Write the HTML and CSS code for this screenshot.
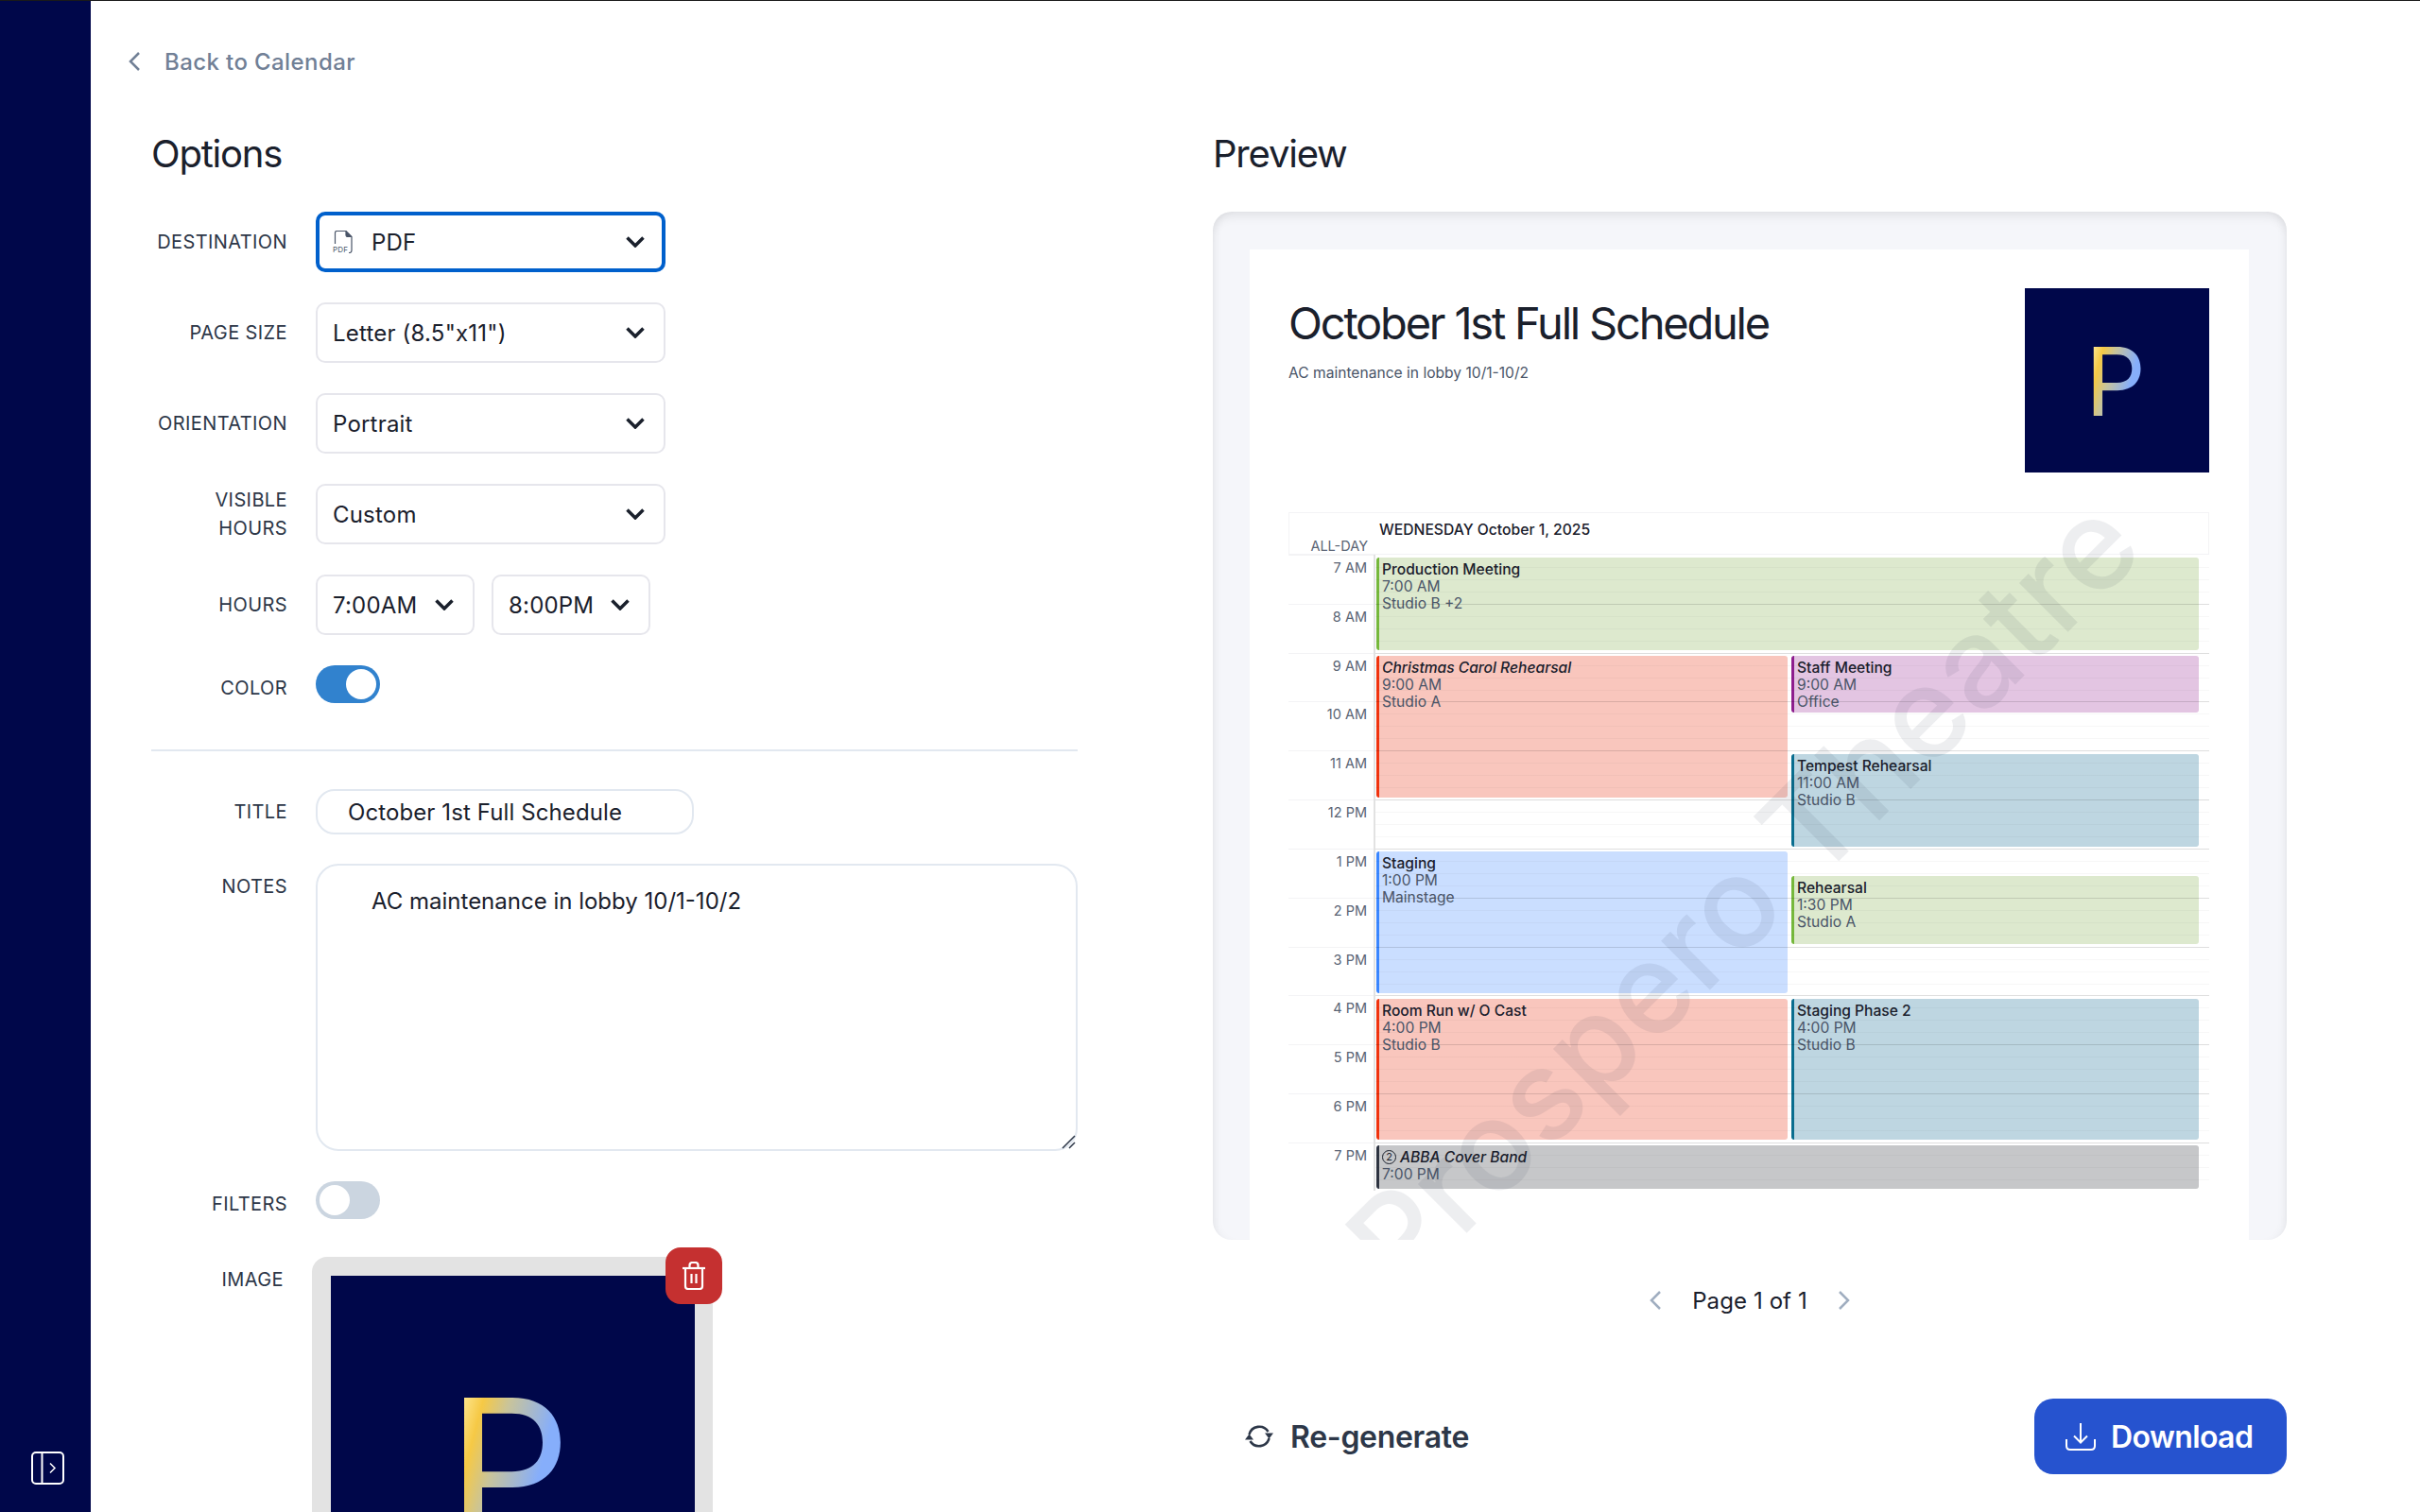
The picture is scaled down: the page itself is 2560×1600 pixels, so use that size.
FILE: index.html
```html
<!DOCTYPE html>
<html lang="en">
<head>
  <meta charset="UTF-8">
  <title>Print Schedule</title>
  <link rel="stylesheet" href="styles.css">
</head>
<body>
  <div class="app">
    <aside class="sidebar">
      <svg class="sidebar-toggle" width="35" height="35" viewBox="0 0 35 35" fill="none" stroke="#fff" stroke-width="2">
        <rect x="1" y="1" width="33" height="33" rx="4"/>
        <path d="M11.5 1v33"/>
        <path d="M20 12.500l5 5-5 5" stroke-width="1.500"/>
      </svg>
    </aside>

    <main class="main">
      <a class="back-link">
        <svg width="12" height="20" viewBox="0 0 12 20" fill="none" stroke="#718096" stroke-width="2.500"><path d="M11 1L2 10l9 9"/></svg>
        <span>Back to Calendar</span>
      </a>

      <div class="columns">
        <section class="options">
          <h2 class="section-title">Options</h2>

          <div class="form-row">
            <label class="form-label">Destination</label>
            <div class="select select-focus">
              <svg class="pdf-icon" width="22" height="24" viewBox="0 0 22 24" fill="none" stroke="#4a5568" stroke-width="1.200">
                <path d="M2.500 14V2.500q0-2 2-2H14l6 6V21q0 2.500-2.500 2.500H17"/>
                <path d="M14 .5v4q0 2 2 2h4" fill="#4a5568"/>
                <text x="0" y="23" class="pdf-icon-text">PDF</text>
              </svg>
              <span class="select-value">PDF</span>
              <svg class="chevron" width="20" height="12" viewBox="0 0 20 12" fill="none" stroke="#1a202c" stroke-width="3.500"><path d="M1.500 1.500L10 10l8.500-8.500"/></svg>
            </div>
          </div>

          <div class="form-row">
            <label class="form-label">Page size</label>
            <div class="select">
              <span class="select-value">Letter (8.5"x11")</span>
              <svg class="chevron" width="20" height="12" viewBox="0 0 20 12" fill="none" stroke="#1a202c" stroke-width="3.500"><path d="M1.500 1.500L10 10l8.500-8.500"/></svg>
            </div>
          </div>

          <div class="form-row">
            <label class="form-label">Orientation</label>
            <div class="select">
              <span class="select-value">Portrait</span>
              <svg class="chevron" width="20" height="12" viewBox="0 0 20 12" fill="none" stroke="#1a202c" stroke-width="3.500"><path d="M1.500 1.500L10 10l8.500-8.500"/></svg>
            </div>
          </div>

          <div class="form-row">
            <label class="form-label">Visible<br>hours</label>
            <div class="select">
              <span class="select-value">Custom</span>
              <svg class="chevron" width="20" height="12" viewBox="0 0 20 12" fill="none" stroke="#1a202c" stroke-width="3.500"><path d="M1.500 1.500L10 10l8.500-8.500"/></svg>
            </div>
          </div>

          <div class="form-row">
            <label class="form-label">Hours</label>
            <div class="hour-selects">
              <div class="select select-small">
                <span class="select-value">7:00AM</span>
                <svg class="chevron" width="20" height="12" viewBox="0 0 20 12" fill="none" stroke="#1a202c" stroke-width="3.500"><path d="M1.500 1.500L10 10l8.500-8.500"/></svg>
              </div>
              <div class="select select-small">
                <span class="select-value">8:00PM</span>
                <svg class="chevron" width="20" height="12" viewBox="0 0 20 12" fill="none" stroke="#1a202c" stroke-width="3.500"><path d="M1.500 1.500L10 10l8.500-8.500"/></svg>
              </div>
            </div>
          </div>

          <div class="form-row toggle-row">
            <label class="form-label">Color</label>
            <span class="toggle toggle-on"><span class="toggle-knob"></span></span>
          </div>

          <hr class="divider">

          <div class="form-row title-row">
            <label class="form-label">Title</label>
            <input class="title-input" type="text" value="October 1st Full Schedule">
          </div>

          <div class="form-row notes-row">
            <label class="form-label">Notes</label>
            <div class="notes-wrap">
              <textarea class="notes-input">AC maintenance in lobby 10/1-10/2</textarea>
              <svg class="notes-grip" width="15" height="15" viewBox="0 0 15 15" fill="none" stroke="#2d3748" stroke-width="1.500">
                <path d="M1 14L14 1M8 14l6-6"/>
              </svg>
            </div>
          </div>

          <div class="form-row toggle-row">
            <label class="form-label">Filters</label>
            <span class="toggle"><span class="toggle-knob"></span></span>
          </div>

          <div class="form-row image-row">
            <label class="form-label">Image</label>
            <div class="image-frame">
              <div class="logo logo-large"><span class="logo-letter">P</span></div>
              <button class="delete-btn">
                <svg width="26" height="30" viewBox="0 0 26 30" fill="none" stroke="#fff" stroke-width="2.200" stroke-linejoin="round">
                  <path d="M1 7h24"/>
                  <path d="M8.500 7V4q0-3 3-3h3q3 0 3 3v3"/>
                  <path d="M4 7v19q0 3 3 3h12q3 0 3-3V7"/>
                  <path d="M10.500 13v10M15.500 13v10"/>
                </svg>
              </button>
            </div>
          </div>
        </section>

        <section class="preview">
          <h2 class="section-title">Preview</h2>

          <div class="preview-sheet">
            <div class="doc-page">
              <div class="doc-header">
                <div class="doc-heading">
                  <h1 class="doc-title">October 1st Full Schedule</h1>
                  <p class="doc-notes">AC maintenance in lobby 10/1-10/2</p>
                </div>
                <div class="logo logo-small"><span class="logo-letter">P</span></div>
              </div>

              <div class="cal-head">
                <div class="cal-allday">ALL-DAY</div>
                <div class="cal-date">WEDNESDAY October 1, 2025</div>
              </div>

              <div class="cal-body">
                <div class="cal-gutter">
                  <div class="cal-hour">7 AM</div>
                  <div class="cal-hour">8 AM</div>
                  <div class="cal-hour">9 AM</div>
                  <div class="cal-hour">10 AM</div>
                  <div class="cal-hour">11 AM</div>
                  <div class="cal-hour">12 PM</div>
                  <div class="cal-hour">1 PM</div>
                  <div class="cal-hour">2 PM</div>
                  <div class="cal-hour">3 PM</div>
                  <div class="cal-hour">4 PM</div>
                  <div class="cal-hour">5 PM</div>
                  <div class="cal-hour">6 PM</div>
                  <div class="cal-hour">7 PM</div>
                </div>

                <div class="cal-grid">
                  <div class="ev ev-full ev-green" style="top:3px;height:98px">
                    <div class="ev-title">Production Meeting</div><div>7:00 AM</div><div>Studio B +2</div>
                  </div>
                  <div class="ev ev-a ev-red" style="top:107px;height:150px">
                    <div class="ev-title ev-italic">Christmas Carol Rehearsal</div><div>9:00 AM</div><div>Studio A</div>
                  </div>
                  <div class="ev ev-b ev-purple" style="top:107px;height:60px">
                    <div class="ev-title">Staff Meeting</div><div>9:00 AM</div><div>Office</div>
                  </div>
                  <div class="ev ev-b ev-teal" style="top:211px;height:98px">
                    <div class="ev-title">Tempest Rehearsal</div><div>11:00 AM</div><div>Studio B</div>
                  </div>
                  <div class="ev ev-a ev-blue" style="top:314px;height:150px">
                    <div class="ev-title">Staging</div><div>1:00 PM</div><div>Mainstage</div>
                  </div>
                  <div class="ev ev-b ev-green" style="top:340px;height:72px">
                    <div class="ev-title">Rehearsal</div><div>1:30 PM</div><div>Studio A</div>
                  </div>
                  <div class="ev ev-a ev-red" style="top:470px;height:149px">
                    <div class="ev-title">Room Run w/ O Cast</div><div>4:00 PM</div><div>Studio B</div>
                  </div>
                  <div class="ev ev-b ev-teal" style="top:470px;height:149px">
                    <div class="ev-title">Staging Phase 2</div><div>4:00 PM</div><div>Studio B</div>
                  </div>
                  <div class="ev ev-full ev-grey" style="top:625px;height:46px">
                    <div class="ev-title ev-italic"><span class="ev-count">2</span>ABBA Cover Band</div><div>7:00 PM</div>
                  </div>

                  <div class="cal-lines">
                    <div class="cal-line"></div><div class="cal-line"></div><div class="cal-line"></div><div class="cal-line"></div>
                    <div class="cal-line"></div><div class="cal-line"></div><div class="cal-line"></div><div class="cal-line"></div>
                    <div class="cal-line"></div><div class="cal-line"></div><div class="cal-line"></div><div class="cal-line"></div>
                    <div class="cal-line"></div>
                  </div>
                </div>
              </div>

              <div class="watermark">Prospero Theatre</div>
            </div>
          </div>

          <div class="pager">
            <svg width="12" height="20" viewBox="0 0 12 20" fill="none" stroke="#a0aec0" stroke-width="2.500"><path d="M11 1L2 10l9 9"/></svg>
            <span>Page 1 of 1</span>
            <svg width="12" height="20" viewBox="0 0 12 20" fill="none" stroke="#a0aec0" stroke-width="2.500"><path d="M1 1l9 9-9 9"/></svg>
          </div>

          <div class="actions">
            <button class="regen-btn">
              <svg width="32" height="32" viewBox="0 0 32 32" fill="none" stroke="#2d3748" stroke-width="2.600">
                <path d="M5.500 14A11 11 0 0 1 25.500 11"/>
                <path d="M26.500 18A11 11 0 0 1 6.500 21"/>
                <path d="M22 12.500h9l-4.500 6z" fill="#2d3748" stroke="none"/>
                <path d="M1 19.500h9l-4.500-6z" fill="#2d3748" stroke="none"/>
              </svg>
              Re-generate
            </button>
            <button class="download-btn">
              <svg width="32" height="30" viewBox="0 0 32 30" fill="none" stroke="#fff" stroke-width="2">
                <path d="M16 1v20M9 14.500l7 7 7-7"/>
                <path d="M1 18v7q0 4 4 4h22q4 0 4-4v-7"/>
              </svg>
              Download
            </button>
          </div>
        </section>
      </div>
    </main>
  </div>
</body>
</html>
```
FILE: styles.css
```css
* {
  box-sizing: border-box;
}

html, body {
  margin: 0;
  height: 1600px;
  overflow: hidden;
}

body {
  background: #fff;
  color: #1a202c;
  font-family: Inter, "Liberation Sans", sans-serif;
  border-top: 1px solid #1a1a1a;
}

.app {
  display: flex;
  height: 1599px;
}

.sidebar {
  width: 96px;
  flex-shrink: 0;
  background: #00074a;
  display: flex;
  align-items: flex-end;
  justify-content: center;
  padding: 0 0 29px 5px;
}

.main {
  flex: 1;
  padding: 51px 141px 0 40px;
  overflow: hidden;
}

.back-link {
  display: flex;
  align-items: center;
  gap: 26px;
  height: 26px;
  color: #718096;
  font-size: 24px;
  font-weight: 500;
  letter-spacing: 0.4px;
}

.columns {
  display: grid;
  grid-template-columns: 980px 1136px;
  column-gap: 143px;
  margin-top: 60px;
  margin-left: 24px;
}

.section-title {
  margin: 0;
  height: 50px;
  font-size: 40px;
  line-height: 50px;
  font-weight: 400;
  letter-spacing: -1.2px;
  color: #1a202c;
}

/* options form */
.options .section-title {
  margin-bottom: 36px;
}

.form-row {
  display: flex;
  align-items: center;
  gap: 30px;
  margin-bottom: 32px;
}

.form-label {
  width: 144px;
  flex-shrink: 0;
  text-align: right;
  text-transform: uppercase;
  font-size: 20px;
  line-height: 30px;
  letter-spacing: 0.4px;
  color: #2d3748;
}

.select {
  width: 370px;
  height: 64px;
  display: flex;
  align-items: center;
  padding: 0 20px 0 16px;
  background: #fff;
  border: 2px solid #e6e6ec;
  border-radius: 10px;
  font-size: 24px;
  letter-spacing: 0.2px;
}

.select-focus {
  border: 4px solid #0060cc;
  padding: 0 18px 0 14px;
}

.pdf-icon {
  margin-right: 19px;
}

.pdf-icon-text {
  font-size: 8px;
  fill: #4a5568;
  stroke: none;
}

.select-value {
  flex: 1;
}

.hour-selects {
  display: flex;
  gap: 18px;
}

.select-small {
  width: 168px;
}

.toggle-row .form-label {
  padding-top: 8px;
}

.toggle {
  width: 68px;
  height: 40px;
  padding: 4px;
  display: flex;
  background: #cbd5e0;
  border-radius: 20px;
}

.toggle-on {
  justify-content: flex-end;
  background: #3182ce;
}

.toggle-knob {
  width: 32px;
  height: 32px;
  background: #fff;
  border-radius: 50%;
}

.divider {
  margin: 49px 0 40px;
  border: 0;
  border-top: 2px solid #e2e8f0;
}

.title-input {
  width: 400px;
  height: 48px;
  padding: 0 32px;
  border: 2px solid #e2e8f0;
  border-radius: 20px;
  font: inherit;
  font-size: 24px;
  letter-spacing: 0.1px;
  color: #1a202c;
}

.title-row {
  margin-bottom: 31px;
}

.notes-row {
  align-items: flex-start;
}

.notes-row .form-label {
  padding-top: 9px;
}

.notes-wrap {
  position: relative;
  width: 806px;
  height: 304px;
}

.notes-input {
  display: block;
  width: 100%;
  height: 100%;
  padding: 22px 57px;
  border: 2px solid #e2e8f0;
  border-radius: 24px;
  font: inherit;
  font-size: 24px;
  line-height: 32px;
  color: #1a202c;
  resize: none;
}

.notes-grip {
  position: absolute;
  right: 2px;
  bottom: 2px;
}

.image-row {
  align-items: flex-start;
  margin-top: 40px;
}

.image-row .form-label {
  width: 140px;
  padding-top: 9px;
}

.image-frame {
  position: relative;
  width: 424px;
  height: 425px;
  padding: 20px;
  background: #e3e3e3;
  border-radius: 16px 16px 0 0;
}

.delete-btn {
  position: absolute;
  top: -10px;
  right: -10px;
  width: 60px;
  height: 60px;
  display: flex;
  align-items: center;
  justify-content: center;
  padding: 0;
  border: 0;
  border-radius: 16px;
  background: #c53030;
}

/* logo block is shared by the form thumb and the doc header */
.logo {
  display: flex;
  align-items: center;
  justify-content: center;
  background: #00074a;
}

.logo-letter {
  font-weight: 400;
  background: linear-gradient(105deg, #fde58f 13%, #f6c945 25%, #c9c49a 40%, #86aefb 68%);
  -webkit-background-clip: text;
  background-clip: text;
  color: transparent;
}

.logo-small {
  width: 195px;
  height: 195px;
  flex-shrink: 0;
  font-size: 100px;
}

.logo-small .logo-letter {
  line-height: 100px;
  margin: 3px 3px 0 0;
}

.logo-large {
  width: 385px;
  height: 385px;
  font-size: 205px;
}

.logo-large .logo-letter {
  line-height: 205px;
  margin: 22px 8px 0 0;
}

/* preview */
.preview .section-title {
  margin-bottom: 36px;
}

.preview-sheet {
  height: 1088px;
  padding: 40px 40px 0 39px;
  background: #f5f6fa;
  border-radius: 20px;
  box-shadow: inset 0 8px 12px -4px rgba(0, 0, 0, 0.09), inset 8px 0 10px -6px rgba(0, 0, 0, 0.05), inset -8px 0 10px -6px rgba(0, 0, 0, 0.05);
  overflow: hidden;
}

.doc-page {
  position: relative;
  height: 1048px;
  padding: 41px 42px 0 41px;
  background: #fff;
  overflow: hidden;
}

.doc-header {
  display: flex;
  justify-content: space-between;
  height: 195px;
}

.doc-title {
  margin: 8px 0 0;
  font-size: 47px;
  line-height: 58px;
  font-weight: 400;
  letter-spacing: -2.2px;
  color: #1a202c;
}

.doc-notes {
  margin: 14px 0 0;
  font-size: 15.6px;
  line-height: 20px;
  color: #4a5568;
}

.cal-head {
  display: flex;
  height: 45px;
  margin-top: 42px;
  border: 1px solid #f3f3f5;
}

.cal-allday {
  width: 83px;
  padding-top: 26px;
  text-align: right;
  font-size: 14.5px;
  line-height: 18px;
  color: #5a6474;
}

.cal-date {
  margin-left: 12px;
  padding-top: 8px;
  font-size: 15.7px;
  line-height: 20px;
  font-weight: 500;
  color: #1a202c;
}

.cal-body {
  display: flex;
  height: 673px;
}

.cal-gutter {
  width: 92px;
  flex-shrink: 0;
  border-right: 2px solid #e2e2e2;
}

.cal-hour {
  height: 51.83px;
  padding: 4px 7px 0 0;
  border-top: 1px solid #f3f3f5;
  text-align: right;
  font-size: 14.5px;
  line-height: 18px;
  color: #5a6474;
}

.cal-grid {
  position: relative;
  flex: 1;
}

.ev {
  position: absolute;
  padding: 4px 0 0 3px;
  border-left: 3px solid;
  border-radius: 3px;
  overflow: hidden;
  font-size: 15.6px;
  line-height: 18px;
  color: #4a5568;
}

.ev-title {
  font-weight: 500;
  color: #1a202c;
}

.ev-italic {
  font-style: italic;
}

.ev-count {
  display: inline-flex;
  align-items: center;
  justify-content: center;
  width: 15px;
  height: 15px;
  margin-right: 4px;
  border: 1px solid #1a202c;
  border-radius: 50%;
  font-size: 11px;
  font-style: normal;
  font-weight: 400;
  vertical-align: 2px;
}

.ev-full {
  left: 1px;
  right: 11px;
}

.ev-a {
  left: 1px;
  width: 435px;
}

.ev-b {
  left: 440px;
  right: 11px;
}

.ev-green {
  background: #dde9ce;
  border-color: #76b83c;
}

.ev-red {
  background: #f9c6bd;
  border-color: #f0330e;
}

.ev-purple {
  background: #e3c5e2;
  border-color: #8e1e8e;
}

.ev-teal {
  background: #bed6e1;
  border-color: #0a6e8f;
}

.ev-blue {
  background: #cadeff;
  border-color: #3a86ff;
}

.ev-grey {
  background: #c6c7c9;
  border-color: #2d3340;
}

/* rules are drawn over the events, they show through the text in the original */
.cal-lines {
  position: absolute;
  inset: 0;
  pointer-events: none;
}

.cal-line {
  height: 51.83px;
  border-top: 1px solid rgba(0, 0, 0, 0.13);
  background-image: linear-gradient(rgba(0, 0, 0, 0.03), rgba(0, 0, 0, 0.03)), linear-gradient(rgba(0, 0, 0, 0.03), rgba(0, 0, 0, 0.03)), linear-gradient(rgba(0, 0, 0, 0.03), rgba(0, 0, 0, 0.03));
  background-size: 100% 1px;
  background-repeat: no-repeat;
  background-position: 0 12px, 0 25px, 0 38px;
}

.cal-line:first-child {
  border-top-color: transparent;
}

.watermark {
  position: absolute;
  left: 521px;
  top: 680px;
  transform: translate(-50%, -50%) rotate(-45deg);
  white-space: nowrap;
  font-size: 134px;
  font-weight: 500;
  line-height: 1;
  color: rgba(30, 40, 60, 0.08);
  pointer-events: none;
}

.pager {
  display: flex;
  align-items: center;
  justify-content: center;
  gap: 33px;
  margin-top: 51px;
  height: 26px;
  font-size: 24px;
  color: #1a202c;
  letter-spacing: 0.1px;
}

.actions {
  display: flex;
  align-items: center;
  justify-content: space-between;
  margin-top: 91px;
}

.regen-btn, .download-btn {
  display: flex;
  align-items: center;
  border: 0;
  font: inherit;
  font-size: 32px;
  font-weight: 600;
}

.regen-btn {
  gap: 17px;
  padding: 0 0 0 33px;
  background: none;
  color: #2d3748;
  letter-spacing: -0.3px;
}

.download-btn {
  gap: 16px;
  width: 267px;
  height: 80px;
  padding: 0 0 0 33px;
  border-radius: 20px;
  background: #2653cf;
  color: #fff;
  letter-spacing: -0.6px;
}
```
